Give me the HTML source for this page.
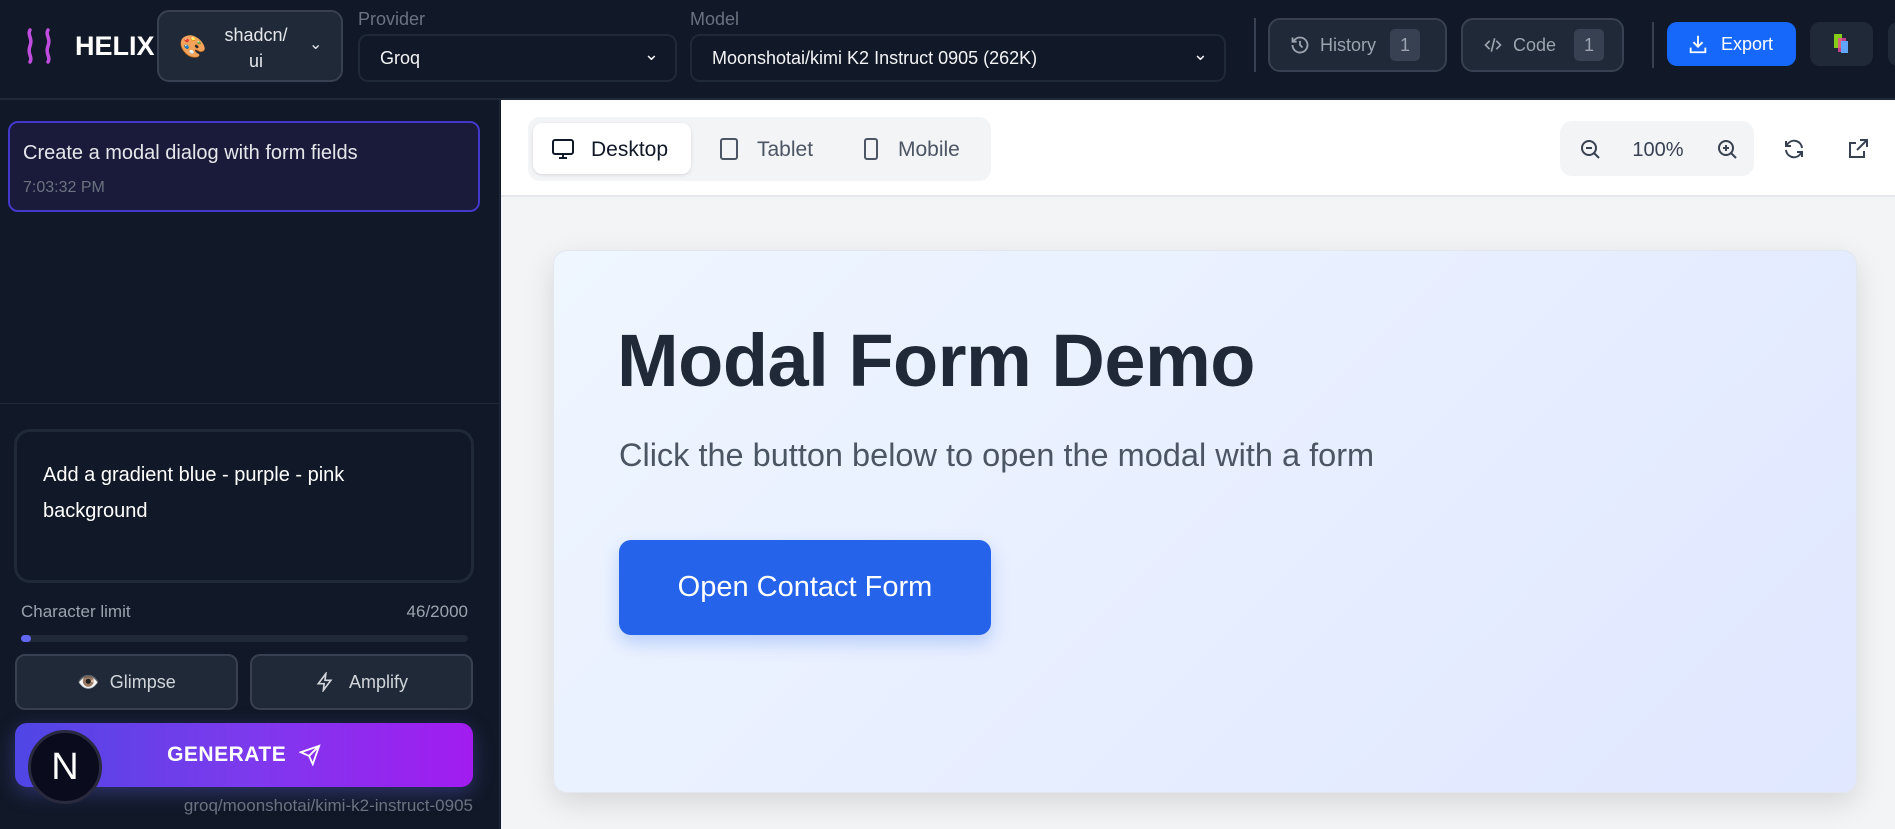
<!DOCTYPE html>
<html><head><meta charset="utf-8"><style>
*{box-sizing:border-box;margin:0;padding:0}
body{width:1895px;height:829px;overflow:hidden;font-family:"Liberation Sans",sans-serif;background:#111827;position:relative}
.abs{position:absolute}
.hdr{left:0;top:0;width:1895px;height:100px;background:#111827;border-bottom:2px solid #1f2937}
.btn{position:absolute;border:2px solid #374151;background:#1f2937;border-radius:12px;color:#9ca3af;display:flex;align-items:center}
.sel{position:absolute;border:2px solid #1f2937;background:#111827;border-radius:10px;color:#f3f4f6;font-size:18px;display:flex;align-items:center;padding-left:20px}
.lbl{position:absolute;color:#6b7280;font-size:18px}
.badge{background:#374151;color:#9ca3af;border-radius:5px;width:30px;height:32px;display:flex;align-items:center;justify-content:center;font-size:18px}
.side{left:0;top:100px;width:500px;height:729px;background:#111827;border-right:1px solid #1f2937}
.main{left:501px;top:100px;width:1394px;height:729px;background:#f3f4f6}
</style></head><body>
<div class="abs hdr"></div>
<svg class="abs" style="left:22px;top:28px" width="34" height="36" viewBox="0 0 34 36"><path d="M8 2c-3 5 3 8 0 16s3 11 0 16" stroke="#c04de0" stroke-width="3.5" fill="none" stroke-linecap="round"/><path d="M26 2c-3 5 3 8 0 16s3 11 0 16" stroke="#c04de0" stroke-width="3.5" fill="none" stroke-linecap="round"/></svg>
<div class="abs" style="left:75px;top:31px;color:#fff;font-weight:bold;font-size:27px">HELIX</div>
<div class="btn" style="left:157px;top:10px;width:186px;height:72px;border-radius:12px">
<span style="position:absolute;left:20px;top:22px;font-size:22px">🎨</span>
<span style="position:absolute;left:62px;top:10px;width:70px;text-align:center;color:#e5e7eb;font-size:18px;line-height:26px">shadcn/<br>ui</span>
<span style="position:absolute;left:150px;top:22px;color:#e5e7eb;font-size:16px">⌄</span></div>
<div class="lbl" style="left:358px;top:9px">Provider</div>
<div class="sel" style="left:358px;top:34px;width:319px;height:48px">Groq<span style="position:absolute;right:16px;top:8px">⌄</span></div>
<div class="lbl" style="left:690px;top:9px">Model</div>
<div class="sel" style="left:690px;top:34px;width:536px;height:48px">Moonshotai/kimi K2 Instruct 0905 (262K)<span style="position:absolute;right:16px;top:8px">⌄</span></div>
<div class="abs" style="left:1254px;top:18px;width:2px;height:54px;background:#374151"></div>
<div class="btn" style="left:1268px;top:18px;width:179px;height:54px;font-size:18px;padding-left:20px">
<svg width="20" height="20" viewBox="0 0 24 24" fill="none" stroke="#9ca3af" stroke-width="2.2"><path d="M3 12a9 9 0 1 0 3-6.7L3 8M3 3v5h5M12 7v5l3 3"/></svg><span style="margin-left:10px">History</span><span class="badge" style="margin-left:14px">1</span></div>
<div class="btn" style="left:1461px;top:18px;width:163px;height:54px;font-size:18px;padding-left:20px">
<svg width="20" height="20" viewBox="0 0 24 24" fill="none" stroke="#9ca3af" stroke-width="2"><path d="M8 7l-5 5 5 5M16 7l5 5-5 5M14 4l-4 16"/></svg><span style="margin-left:10px">Code</span><span class="badge" style="margin-left:18px">1</span></div>
<div class="abs" style="left:1652px;top:22px;width:2px;height:46px;background:#374151"></div>
<div class="abs" style="left:1667px;top:22px;width:129px;height:44px;background:#1668fb;border-radius:10px;color:#fff;font-size:18px;display:flex;align-items:center;padding-left:20px">
<svg width="22" height="22" viewBox="0 0 24 24" fill="none" stroke="#fff" stroke-width="2"><path d="M12 3v12M7 10l5 5 5-5M4 16v5h16v-5"/></svg><span style="margin-left:12px">Export</span></div>
<div class="abs" style="left:1810px;top:22px;width:63px;height:44px;background:#1f2937;border-radius:10px"><div class="abs" style="left:24px;top:12px;width:8px;height:14px;background:#84cc16"></div><div class="abs" style="left:28px;top:16px;width:8px;height:14px;background:#ec4899;opacity:.8"></div><div class="abs" style="left:31px;top:19px;width:7px;height:12px;background:#60a5fa"></div></div>
<div class="abs" style="left:1888px;top:22px;width:20px;height:44px;background:#1f2937;border-radius:10px"></div>

<div class="abs side"></div>
<div class="abs" style="left:8px;top:121px;width:472px;height:91px;border:2px solid #4338ca;border-radius:10px;background:#1a1b3a">
<div class="abs" style="left:13px;top:19px;color:#e5e7eb;font-size:20px">Create a modal dialog with form fields</div>
<div class="abs" style="left:13px;top:56px;color:#6b7280;font-size:16px">7:03:32 PM</div></div>
<div class="abs" style="left:0;top:403px;width:500px;height:1px;background:#1f2937"></div>
<div class="abs" style="left:14px;top:429px;width:460px;height:154px;border:3px solid #1f2937;border-radius:16px;background:#111827">
<div class="abs" style="left:26px;top:25px;color:#fff;font-size:20px;line-height:36px;width:400px">Add a gradient blue - purple - pink background</div></div>
<div class="abs" style="left:21px;top:602px;color:#9ca3af;font-size:17px">Character limit</div>
<div class="abs" style="left:398px;top:602px;width:70px;text-align:right;color:#9ca3af;font-size:17px">46/2000</div>
<div class="abs" style="left:21px;top:635px;width:447px;height:7px;border-radius:4px;background:#1f2937"><div style="width:10px;height:7px;border-radius:4px;background:#6366f1"></div></div>
<div class="btn" style="left:15px;top:654px;width:223px;height:56px;justify-content:center;color:#d1d5db;font-size:18px;border-radius:10px">👁️&nbsp; Glimpse</div>
<div class="btn" style="left:250px;top:654px;width:223px;height:56px;justify-content:center;color:#d1d5db;font-size:18px;border-radius:10px"><svg width="20" height="20" viewBox="0 0 24 24" fill="none" stroke="#d1d5db" stroke-width="2"><path d="M13 2L4 14h7l-1 8 9-12h-7z"/></svg>&nbsp;&nbsp; Amplify</div>
<div class="abs" style="left:15px;top:723px;width:458px;height:64px;border-radius:12px;background:linear-gradient(90deg,#4f46e5,#7c3aed 50%,#a21cf0);box-shadow:0 6px 20px rgba(99,102,241,.35);display:flex;align-items:center;justify-content:center;color:#fff;font-weight:bold;font-size:21px;letter-spacing:.5px">GENERATE&nbsp;&nbsp;<svg width="22" height="22" viewBox="0 0 24 24" fill="none" stroke="#fff" stroke-width="2"><path d="M22 2L11 13M22 2l-7 20-4-9-9-4z"/></svg></div>
<div class="abs" style="left:28px;top:730px;width:74px;height:74px;border-radius:50%;background:#0b0b1e;border:3px solid #2a2a3e;color:#fff;font-size:38px;display:flex;align-items:center;justify-content:center">N</div>
<div class="abs" style="left:150px;top:796px;width:323px;text-align:right;color:#6b7280;font-size:17px">groq/moonshotai/kimi-k2-instruct-0905</div>

<div class="abs main"></div>
<div class="abs" style="left:501px;top:100px;width:1394px;height:97px;background:#fff;border-bottom:2px solid #e5e7eb"></div>
<div class="abs" style="left:528px;top:117px;width:463px;height:64px;background:#f3f4f6;border-radius:12px"></div>
<div class="abs" style="left:533px;top:123px;width:158px;height:51px;background:#fff;border-radius:9px;box-shadow:0 1px 3px rgba(0,0,0,.12)"></div>
<svg class="abs" style="left:551px;top:137px" width="24" height="24" viewBox="0 0 24 24" fill="none" stroke="#111827" stroke-width="2"><rect x="2" y="3" width="20" height="14" rx="2"/><path d="M8 21h8M12 17v4"/></svg>
<div class="abs" style="left:591px;top:138px;font-size:21px;color:#111827">Desktop</div>
<svg class="abs" style="left:717px;top:137px" width="24" height="24" viewBox="0 0 24 24" fill="none" stroke="#4b5563" stroke-width="2"><rect x="4" y="2" width="16" height="20" rx="2"/><path d="M12 18h.01"/></svg>
<div class="abs" style="left:757px;top:138px;font-size:21px;color:#4b5563">Tablet</div>
<svg class="abs" style="left:859px;top:137px" width="24" height="24" viewBox="0 0 24 24" fill="none" stroke="#4b5563" stroke-width="2"><rect x="6" y="2" width="12" height="20" rx="2"/><path d="M12 18h.01"/></svg>
<div class="abs" style="left:898px;top:138px;font-size:21px;color:#4b5563">Mobile</div>
<div class="abs" style="left:1560px;top:121px;width:194px;height:55px;background:#f3f4f6;border-radius:12px"></div>
<svg class="abs" style="left:1578px;top:137px" width="24" height="24" viewBox="0 0 24 24" fill="none" stroke="#374151" stroke-width="2"><circle cx="11" cy="11" r="7"/><path d="M21 21l-5-5M8 11h6"/></svg>
<div class="abs" style="left:1620px;top:139px;width:76px;text-align:center;font-size:20px;color:#374151">100%</div>
<svg class="abs" style="left:1715px;top:137px" width="24" height="24" viewBox="0 0 24 24" fill="none" stroke="#374151" stroke-width="2"><circle cx="11" cy="11" r="7"/><path d="M21 21l-5-5M8 11h6M11 8v6"/></svg>
<svg class="abs" style="left:1782px;top:137px" width="24" height="24" viewBox="0 0 24 24" fill="none" stroke="#374151" stroke-width="2"><path d="M20 11a8 8 0 0 0-14-4.5L4 9M4 4v5h5M4 13a8 8 0 0 0 14 4.5l2-2.5M20 20v-5h-5"/></svg>
<svg class="abs" style="left:1846px;top:137px" width="24" height="24" viewBox="0 0 24 24" fill="none" stroke="#374151" stroke-width="2"><path d="M14 3h7v7M21 3l-10 10M18 14v6H4V6h6"/></svg>

<div class="abs" style="left:553px;top:250px;width:1304px;height:543px;border:1px solid #e2e6ee;border-radius:14px;background:linear-gradient(135deg,#eff6ff,#e0e7ff);box-shadow:0 10px 30px rgba(0,0,0,.12)"></div>
<div class="abs" style="left:617px;top:318px;font-size:74px;font-weight:bold;color:#1f2937;letter-spacing:-0.5px">Modal Form Demo</div>
<div class="abs" style="left:619px;top:437px;font-size:32.5px;color:#4b5563">Click the button below to open the modal with a form</div>
<div class="abs" style="left:619px;top:540px;width:372px;height:95px;border-radius:12px;background:#2563eb;color:#fff;font-size:29px;display:flex;align-items:center;justify-content:center;box-shadow:0 8px 18px rgba(37,99,235,.25)">Open Contact Form</div>
</body></html>
